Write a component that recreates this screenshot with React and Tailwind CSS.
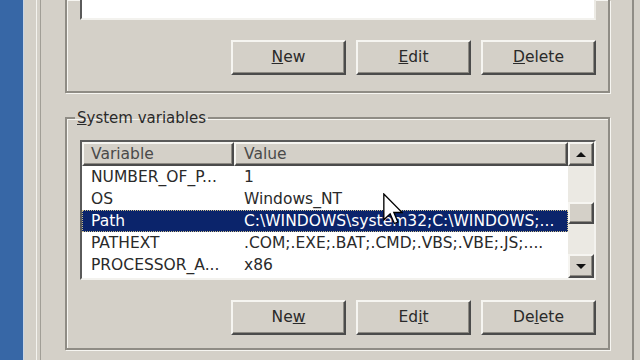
const raised =
    'bg-[#d4d0c8] border-2 border-t-[#f6f5f1] border-l-[#f6f5f1] border-r-[#4b4b4b] border-b-[#4b4b4b] shadow-[inset_-1px_-1px_0_#8d8a83]';

const etched =
    'border-2 border-[#8f8c85] shadow-[inset_1px_1px_0_#f6f5f1,1px_1px_0_#f6f5f1]';

const rows = [
    ['NUMBER_OF_P...', '1'],
    ['OS', 'Windows_NT'],
    ['Path', 'C:\\WINDOWS\\system32;C:\\WINDOWS;...', true],
    ['PATHEXT', '.COM;.EXE;.BAT;.CMD;.VBS;.VBE;.JS;....'],
    ['PROCESSOR_A...', 'x86'],
];

function WinButton({ children }) {
    return (
        <div className={`w-[115px] h-[35px] flex items-center justify-center ${raised}`}>
            <span className="leading-none">{children}</span>
        </div>
    );
}

function ButtonRow({ labels }) {
    return (
        <div className="flex justify-end gap-[10px] mt-[20px]">
            {labels.map((l, i) => <WinButton key={i}>{l}</WinButton>)}
        </div>
    );
}

function Arrow({ down }) {
    return (
        <svg width="10" height="5" viewBox="0 0 10 5">
            <path d={down ? 'M0 0 L10 0 L5 5 Z' : 'M0 5 L5 0 L10 5 Z'} fill="#111" />
        </svg>
    );
}

function ScrollBar() {
    return (
        <div className="w-[26px] shrink-0 flex flex-col bg-[#ebe9e3]">
            <div className={`h-[24px] flex items-center justify-center ${raised}`}><Arrow /></div>
            <div className="h-[36px]" />
            <div className={`h-[22px] ${raised}`} />
            <div className="flex-1" />
            <div className={`h-[24px] flex items-center justify-center ${raised}`}><Arrow down /></div>
        </div>
    );
}

function VarList() {
    return (
        <div className="h-[140px] flex bg-white border-2 border-t-[#5a5a5a] border-l-[#5a5a5a] border-r-[#f3f2ee] border-b-[#f3f2ee] overflow-hidden">
            <div className="flex-1 min-w-0 overflow-hidden">
                {/* column headers */}
                <div className="flex h-[24px] text-[#4a4a4a]">
                    <div className={`w-[152px] shrink-0 pl-[7px] leading-[20px] ${raised}`}>Variable</div>
                    <div className={`flex-1 pl-[8px] leading-[20px] ${raised}`}>Value</div>
                </div>
                {rows.map(([name, value, sel]) => (
                    <div
                        key={name}
                        className={`flex h-[22px] leading-[20px] whitespace-nowrap border ${sel
                            ? 'bg-[#0b246b] text-white border-dotted border-[#c9bc8c]'
                            : 'border-transparent'}`}
                    >
                        <div className="w-[151px] shrink-0 pl-[8px] overflow-hidden">{name}</div>
                        <div className="flex-1 pl-[10px] overflow-hidden">{value}</div>
                    </div>
                ))}
            </div>
            <ScrollBar />
        </div>
    );
}

export default function App() {
    return (
        <div className="relative flex w-[640px] h-[360px] overflow-hidden bg-[#d4d0c8] font-['DejaVu_Sans',sans-serif] text-[15.5px] text-[#2a2a2a]">
            {/* desktop strip */}
            <div className="w-[24px] shrink-0 bg-[#3767a6] border-r border-r-[#c9d5e4]" />
            <div className="w-[12px] shrink-0" />

            {/* dialog frame */}
            <div className="w-[598px] shrink-0 border-l border-l-[#f4f3ef] pl-[3px]">
                <div className="h-full border-l border-l-[#a19e96] border-r-2 border-r-[#8f8c85] pl-[24px] pr-[22px]">
                    {/* User variables (scrolled off the top) */}
                    <div className={`${etched} border-t-0 pl-[13px] pr-[12px] pb-[16px]`}>
                        <div className="h-[20px] bg-white border-l-2 border-l-[#5a5a5a] border-r-2 border-r-[#eceae4] border-b-2 border-b-[#f3f2ee]" />
                        <ButtonRow labels={[
                            <><u>N</u>ew</>,
                            <><u>E</u>dit</>,
                            <><u>D</u>elete</>,
                        ]} />
                    </div>

                    {/* System variables */}
                    <fieldset className={`${etched} mt-[16px] pl-[13px] pr-[12px] pb-[13px]`}>
                        <legend className="ml-[-5px] px-[2px] leading-[18px] text-[15px]">
                            <u>S</u>ystem variables
                        </legend>
                        <div className="mt-[13px]">
                            <VarList />
                        </div>
                        <ButtonRow labels={[
                            <>Ne<u>w</u></>,
                            <>Ed<u>i</u>t</>,
                            <>De<u>l</u>ete</>,
                        ]} />
                    </fieldset>
                </div>
            </div>

            {/* mouse pointer */}
            <svg className="absolute left-[383px] top-[193px]" width="20" height="32" viewBox="0 0 12 19">
                <path d="M0.5 0.5 L0.5 16 L4.3 12.4 L6.8 18.2 L8.9 17.3 L6.5 11.6 L11.5 11.6 Z" fill="#fff" stroke="#000" strokeWidth="0.8" strokeLinejoin="miter" />
            </svg>
        </div>
    );
}
